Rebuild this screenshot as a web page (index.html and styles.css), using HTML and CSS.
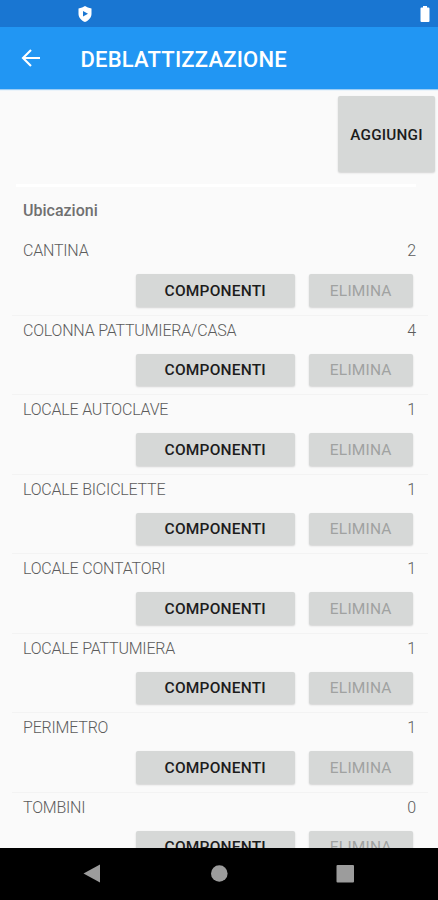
FILE: index.html
```html
<!DOCTYPE html>
<html lang="it">
<head>
<meta charset="utf-8">
<title>Deblattizzazione</title>
<link rel="stylesheet" href="styles.css">
</head>
<body>
<div class="status">
  <svg class="shield" width="14" height="16" viewBox="0 0 14 16"><path d="M7 0Q9.500 2 13.500 2.400V8c0 3.600-2.900 6.600-6.500 8C3.400 14.600.5 11.600.5 8V2.400Q4.500 2 7 0Z" fill="#fff"/><path d="M5 5v5.600L10 7.800Z" fill="#1976d2"/></svg>
  <svg class="battery" width="10" height="16" viewBox="0 0 10 16"><path d="M3 0h4v1.500h1.500q1 0 1 1V15q0 1-1 1h-7q-1 0-1-1V2.500q0-1 1-1H3Z" fill="#fff"/></svg>
</div>
<header class="bar">
  <svg class="back" width="20" height="18" viewBox="0 0 20 18"><path d="M19 9H2M10 1 2 9l8 8" fill="none" stroke="#fff" stroke-width="2.100"/></svg>
  <h1>DEBLATTIZZAZIONE</h1>
</header>
<main>
  <div class="top"><button class="btn add">AGGIUNGI</button></div>
  <div class="rule"></div>
  <h2>Ubicazioni</h2>
  <ul>
    <li><div class="line"><span>CANTINA</span><span>2</span></div><div class="actions"><button class="btn comp">COMPONENTI</button><button class="btn del" disabled>ELIMINA</button></div></li>
    <li><div class="line"><span>COLONNA PATTUMIERA/CASA</span><span>4</span></div><div class="actions"><button class="btn comp">COMPONENTI</button><button class="btn del" disabled>ELIMINA</button></div></li>
    <li><div class="line"><span>LOCALE AUTOCLAVE</span><span>1</span></div><div class="actions"><button class="btn comp">COMPONENTI</button><button class="btn del" disabled>ELIMINA</button></div></li>
    <li><div class="line"><span>LOCALE BICICLETTE</span><span>1</span></div><div class="actions"><button class="btn comp">COMPONENTI</button><button class="btn del" disabled>ELIMINA</button></div></li>
    <li><div class="line"><span>LOCALE CONTATORI</span><span>1</span></div><div class="actions"><button class="btn comp">COMPONENTI</button><button class="btn del" disabled>ELIMINA</button></div></li>
    <li><div class="line"><span>LOCALE PATTUMIERA</span><span>1</span></div><div class="actions"><button class="btn comp">COMPONENTI</button><button class="btn del" disabled>ELIMINA</button></div></li>
    <li><div class="line"><span>PERIMETRO</span><span>1</span></div><div class="actions"><button class="btn comp">COMPONENTI</button><button class="btn del" disabled>ELIMINA</button></div></li>
    <li><div class="line"><span>TOMBINI</span><span>0</span></div><div class="actions"><button class="btn comp">COMPONENTI</button><button class="btn del" disabled>ELIMINA</button></div></li>
  </ul>
</main>
<nav>
  <svg width="438" height="52" viewBox="0 1 438 52" fill="#9c9c9c"><path d="M83.500 26.500 100 17.500v18Z"/><circle cx="219.300" cy="26.500" r="8.300"/><rect x="336.500" y="18" width="17.500" height="17.500" rx="1"/></svg>
</nav>
</body>
</html>
```
FILE: styles.css
```css
* { box-sizing: border-box; }
body {
  margin: 0;
  width: 438px;
  height: 900px;
  display: flex;
  flex-direction: column;
  overflow: hidden;
  background: #fafafa;
  font-family: Roboto, sans-serif;
}
.status {
  height: 27px;
  flex: none;
  display: flex;
  justify-content: space-between;
  padding: 6px 8px 0 78px;
  background: #1976d2;
}
.bar {
  height: 62px;
  flex: none;
  display: flex;
  align-items: center;
  padding-left: 21px;
  background: #2196f3;
  box-shadow: 0 1px 1px #9bcdf5;
}
h1 {
  margin: 3px 0 0 39.5px;
  font-size: 22px;
  font-weight: 500;
  letter-spacing: .2px;
  line-height: 26px;
  color: #fff;
}
main { flex: 1; min-height: 0; overflow: hidden; }
.top {
  height: 95px;
  padding: 7px 3px 0 0;
  display: flex;
  justify-content: flex-end;
}
.btn {
  display: block;
  border: 0;
  border-radius: 2px;
  padding: 0;
  background: #d6d8d7;
  box-shadow: 0 1px 2px rgba(0, 0, 0, .16);
  font: 500 15.5px/20px Roboto, sans-serif;
  letter-spacing: .2px;
  color: #1c1c1c;
}
.add { width: 97px; height: 76px; padding-top: 2px; font-size: 15.3px; }
.rule { height: 3px; margin: 0 22px 0 16px; background: #fff; }
h2 {
  margin: 0;
  padding: 14px 0 0 23px;
  height: 49px;
  font-size: 16px;
  font-weight: 500;
  line-height: 20px;
  color: #707070;
}
ul { list-style: none; margin: 0; padding: 0 10px 0 12px; }
li { height: 79.5px; border-bottom: 1px solid #f3f3f3; }
.line {
  display: flex;
  justify-content: space-between;
  height: 38px;
  padding: 5.4px 12px 0 11px;
  font-size: 16px;
  font-weight: 300;
  letter-spacing: -.2px;
  line-height: 20px;
  color: #5c5c5c;
}
.actions {
  display: flex;
  justify-content: flex-end;
  gap: 14px;
  padding-right: 15.5px;
}
.comp { width: 159.5px; height: 32.5px; padding-top: 1px; }
.del {
  width: 103.5px;
  height: 32.5px;
  padding-top: 1px;
  font-weight: 400;
  color: #a0a2a1;
}
nav { height: 52px; flex: none; background: #000; }
nav svg { display: block; }
```
